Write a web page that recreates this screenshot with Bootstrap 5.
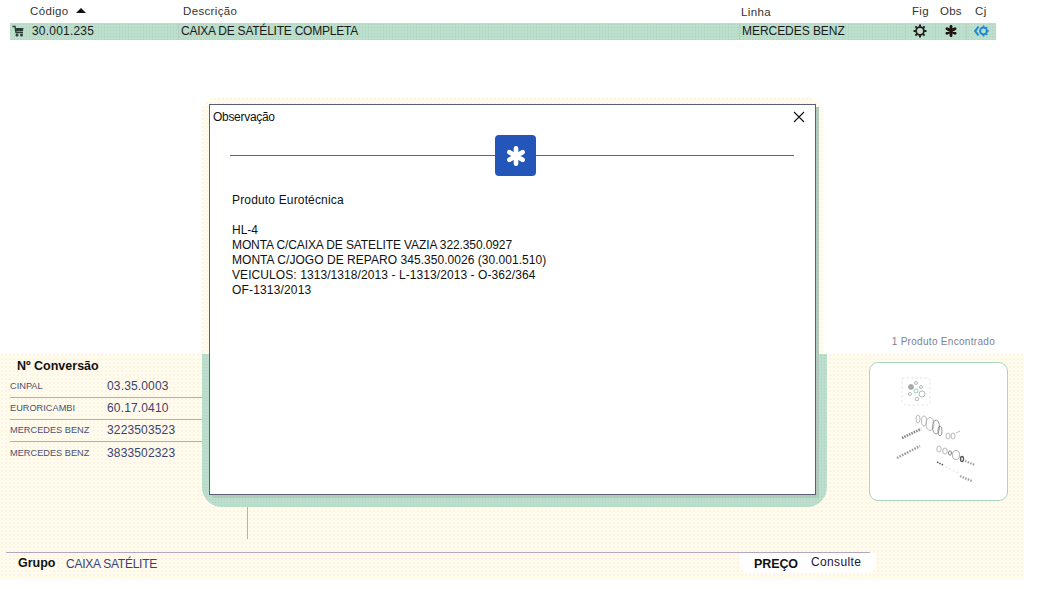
<!DOCTYPE html>
<html lang="pt">
<head>
<meta charset="utf-8">
<title>Observação</title>
<link href="https://cdn.jsdelivr.net/npm/bootstrap@5.3.0/dist/css/bootstrap.min.css" rel="stylesheet">
<style>
html,body{height:589px;overflow:hidden;background:#fff;}
body{font-family:"Liberation Sans",Arial,sans-serif;font-size:12px;color:#111;line-height:15px;position:relative;}
.cream{background-color:#fffce9;background-image:radial-gradient(circle,#fff0ee 0.7px,transparent 0.8px);background-size:4px 4px;}
.grid-cols{display:grid;grid-template-columns:168px 561px 166px 30px 31px 30px;margin-left:10px;width:986px;}
.head-row{height:23px;padding-top:4px;color:#333;letter-spacing:.35px;font-size:11.5px;}
.head-row>div{white-space:nowrap;}
.h-code{padding-left:20px;}.h-desc{padding-left:5px;}.h-line{padding-left:2px;padding-top:1px;}
.h-fig{padding-left:7px;}.h-obs{padding-left:5px;letter-spacing:.2px;}.h-cj{padding-left:9px;}
.sort-up{display:inline-block;width:0;height:0;border-left:5.5px solid transparent;border-right:5.5px solid transparent;border-bottom:5px solid #111;margin:0 0 2px 7px;}
.data-row{height:17px;background-color:#bbdfca;background-image:radial-gradient(circle,#b0d2c2 .7px,transparent .8px);background-size:3px 3px;font-size:12px;line-height:16px;color:#1a1a1a;}
.data-row>div{white-space:nowrap;border-left:1px solid #b2d0c3;display:flex;align-items:center;padding-bottom:1px;}
.data-row>div:first-child{border-left:0;padding-left:2px;}
.d-code{gap:8px;letter-spacing:.2px;}.d-desc{padding-left:2px;letter-spacing:-.23px;}.d-line{padding-left:2px;letter-spacing:-.05px;}
.d-icon{justify-content:center;padding-right:1px;}
.found{height:313px;padding:295px 42px 0 0;text-align:right;color:#7a7f95;font-size:10px;letter-spacing:.3px;line-height:14px;}
.panel-main{width:1024px;height:226px;}
.upper{height:199px;}
.conv{width:248px;height:186px;border-right:1px solid #b5b0bd;padding:6px 0 0 10px;}
.conv-title{font-weight:700;font-size:12.5px;padding-left:7px;height:17px;color:#111;}
.conv-row{height:22px;display:flex;align-items:center;border-bottom:1px solid #b3acc0;}
.conv-row:last-child{border-bottom:0;}
.conv-name{width:97px;font-size:9.2px;letter-spacing:.02px;color:#4a5070;white-space:nowrap;}
.conv-val{font-size:12px;letter-spacing:.15px;color:#3a4270;}
.thumb-box{width:139px;height:139px;margin:9px 16px 0 0;background:#fff;border:1px solid #a9d6bf;border-radius:9px;}
.thumb-box svg{display:block;}
.bottom{width:864px;margin-left:6px;height:27px;border-top:1px solid #b3a6bf;}
.g-label{font-weight:700;font-size:12.5px;margin-left:12px;width:48px;color:#111;padding-top:3px;}
.g-val{color:#3a3f78;padding-top:4px;letter-spacing:-.25px;}
.price-pill{background:#fff;border-radius:0 0 10px 10px;height:20px;width:136px;margin-left:auto;margin-right:-6px;padding:2px 0 0 14px;}
.p-label{font-weight:700;font-size:12.5px;width:57px;padding-top:2px;color:#111;letter-spacing:-.1px;}
.p-val{color:#1a1540;letter-spacing:.35px;}
.halo-top{position:absolute;left:201px;top:97px;width:622px;height:257px;border-radius:18px 18px 0 0;}
.halo-low{position:absolute;left:202px;top:354px;width:625px;height:153px;background-color:#b8e0cb;background-image:radial-gradient(circle,#c6bfd0 .7px,transparent .8px);background-size:3px 3px;border-radius:0 0 20px 20px;}
.win{position:absolute;left:209px;top:104px;width:607px;height:391px;background:#fff;border:1px solid #5a5f78;box-shadow:3px 3px 0 #b4c9bd;}
.win-title{position:absolute;left:3px;top:5px;color:#111;letter-spacing:-.3px;}
.win-close{position:absolute;right:10px;top:6px;width:12px;height:12px;padding:0;background:none;border:0;line-height:0;}
.obs-rule{position:absolute;left:20px;top:50px;width:564px;border-top:1px solid #0a9a30;}
.obs-tile{position:absolute;left:285px;top:30px;width:41px;height:41px;border-radius:4px;background:#2356b8;display:flex;align-items:center;justify-content:center;}
.win-body{position:absolute;left:22px;top:88px;color:#111;white-space:nowrap;}
.win-body p{margin:0;}
.ls-a{letter-spacing:.16px;}.ls-b{letter-spacing:-.11px;}.ls-c{letter-spacing:.04px;}.ls-d{letter-spacing:.08px;}
</style>
</head>
<body>
<div class="grid-cols head-row">
  <div class="h-code">Código<span class="sort-up"></span></div>
  <div class="h-desc">Descrição</div>
  <div class="h-line">Linha</div>
  <div class="h-fig">Fig</div>
  <div class="h-obs">Obs</div>
  <div class="h-cj">Cj</div>
</div>
<div class="grid-cols data-row">
  <div class="d-code">
    <svg width="12" height="12" viewBox="0 0 12 12"><path d="M0.5 1.5H3L4 7.5H11" fill="none" stroke="#2c3a35" stroke-width="1.4"/><path d="M3.5 3H11.5L10.8 6.3H4Z" fill="#2c3a35"/><circle cx="5" cy="10" r="1.5" fill="#2c3a35"/><circle cx="9.5" cy="10" r="1.5" fill="#2c3a35"/></svg>
    <span>30.001.235</span>
  </div>
  <div class="d-desc">CAIXA DE SATÉLITE COMPLETA</div>
  <div class="d-line">MERCEDES BENZ</div>
  <div class="d-icon">
    <svg width="14" height="14" viewBox="0 0 14 14"><g stroke="#222" stroke-width="2"><path d="M7 .5V13.5M.5 7H13.5M2.4 2.4L11.6 11.6M11.6 2.4L2.4 11.6"/></g><circle cx="7" cy="7" r="4.8" fill="#222"/><circle cx="7" cy="7" r="3" fill="#c8d8cc"/></svg>
  </div>
  <div class="d-icon">
    <svg width="12" height="12" viewBox="0 0 12 12"><g stroke="#1f1410" stroke-width="2.9" stroke-linecap="round"><path d="M6 1.4V10.6M2 3.7L10 8.3M10 3.7L2 8.3"/></g></svg>
  </div>
  <div class="d-icon">
    <svg width="15" height="12" viewBox="0 0 15 12"><circle cx="9.5" cy="6" r="3.4" fill="none" stroke="#1d86d6" stroke-width="2"/><path d="M9.5 .6V2.2M9.5 9.8V11.4M14.8 6H12.8M13.3 2.2L12 3.5M13.3 9.8L12 8.5" stroke="#1d86d6" stroke-width="1.5"/><path d="M4.6 1.6L1 6L4.6 10.4" fill="none" stroke="#1d86d6" stroke-width="2"/></svg>
  </div>
</div>
<div class="found">1 Produto Encontrado</div>
<div class="panel-main cream">
  <div class="upper d-flex justify-content-between">
    <div class="conv">
      <div class="conv-title">Nº Conversão</div>
      <div class="conv-row"><span class="conv-name">CINPAL</span><span class="conv-val">03.35.0003</span></div>
      <div class="conv-row"><span class="conv-name">EURORICAMBI</span><span class="conv-val">60.17.0410</span></div>
      <div class="conv-row"><span class="conv-name">MERCEDES BENZ</span><span class="conv-val">3223503523</span></div>
      <div class="conv-row"><span class="conv-name">MERCEDES BENZ</span><span class="conv-val">3833502323</span></div>
    </div>
    <div class="thumb-box">
      <svg width="137" height="137" viewBox="0 0 137 137" fill="none" stroke="#a3a8a5" stroke-width=".8">
        <path d="M32 15H58Q60 15 60 18V40L57 42H38Q33 42 32 38Z" stroke="#d3e6db" stroke-dasharray="2.5 2"/>
        <circle cx="41" cy="24" r="2.5" fill="#aaa"/><circle cx="46" cy="20" r="1.5"/><circle cx="51" cy="24" r="1.5"/><circle cx="40" cy="31" r="1.5"/><circle cx="46" cy="28" r="2" stroke="#8bbf9f"/><circle cx="52" cy="31" r="3"/><circle cx="47" cy="36" r="1.8"/>
        <ellipse cx="48" cy="56" rx="2" ry="4"/><ellipse cx="54" cy="58" rx="2.5" ry="5"/><ellipse cx="60" cy="61" rx="4" ry="6.5"/><ellipse cx="66" cy="64" rx="3.5" ry="7" stroke="#7d8280"/><ellipse cx="70" cy="68" rx="2" ry="5" stroke="#777"/>
        <ellipse cx="78" cy="73" rx="2" ry="3"/><ellipse cx="83" cy="73" rx="2" ry="3"/><path d="M86 70L90 68"/>
        <path d="M32 75L51 66" stroke="#868a88" stroke-width="2.6" stroke-dasharray="1.6 1"/>
        <path d="M27 95L50 83" stroke="#9a9e9c" stroke-width="2.4" stroke-dasharray="1.6 1.2"/>
        <ellipse cx="69" cy="86" rx="2.2" ry="3"/><ellipse cx="75" cy="88" rx="2.2" ry="3"/><ellipse cx="80" cy="90" rx="1.5" ry="2.2" stroke="#666"/><ellipse cx="86" cy="92" rx="3.5" ry="4.5" stroke="#999"/><ellipse cx="92" cy="96" rx="1.5" ry="2.5" stroke="#555" stroke-width="1.3"/><path d="M95 98L105 102" stroke="#a3a8a5" stroke-width="2.2" stroke-dasharray="1.6 1.2"/>
        <path d="M67 99L73 102" stroke="#666" stroke-width="1.6" stroke-dasharray="1.6 1"/>
        <path d="M76 104L88 110" stroke="#b5b9b7" stroke-dasharray="1 3"/>
        <path d="M90 113L102 118" stroke="#a3a8a5" stroke-width="2.4" stroke-dasharray="1.6 1.2"/>
      </svg>
    </div>
  </div>
  <div class="bottom d-flex">
    <span class="g-label">Grupo</span>
    <span class="g-val">CAIXA SATÉLITE</span>
    <div class="price-pill d-flex"><span class="p-label">PREÇO</span><span class="p-val">Consulte</span></div>
  </div>
</div>

<div class="halo-top cream"></div>
<div class="halo-low"></div>
<div class="win">
  <div class="win-title">Observação</div>
  <button type="button" class="win-close" aria-label="Fechar"><svg width="12" height="12" viewBox="0 0 12 12"><path d="M1 1L11 11M11 1L1 11" stroke="#111" stroke-width="1.1"/></svg></button>
  <div class="obs-rule"></div>
  <div class="obs-tile"><svg width="22" height="22" viewBox="0 0 20 20"><g stroke="#fff" stroke-width="4.2" stroke-linecap="round"><path d="M10 3V17M4 6.5L16 13.5M16 6.5L4 13.5"/></g></svg></div>
  <div class="win-body">
    <p class="ls-a">Produto Eurotécnica</p>
    <p>&nbsp;</p>
    <p>HL-4</p>
    <p class="ls-b">MONTA C/CAIXA DE SATELITE VAZIA 322.350.0927</p>
    <p class="ls-c">MONTA C/JOGO DE REPARO 345.350.0026 (30.001.510)</p>
    <p class="ls-d">VEICULOS: 1313/1318/2013 - L-1313/2013 - O-362/364</p>
    <p class="ls-a">OF-1313/2013</p>
  </div>
</div>
<script src="https://cdn.jsdelivr.net/npm/bootstrap@5.3.0/dist/js/bootstrap.bundle.min.js"></script>
</body>
</html>
